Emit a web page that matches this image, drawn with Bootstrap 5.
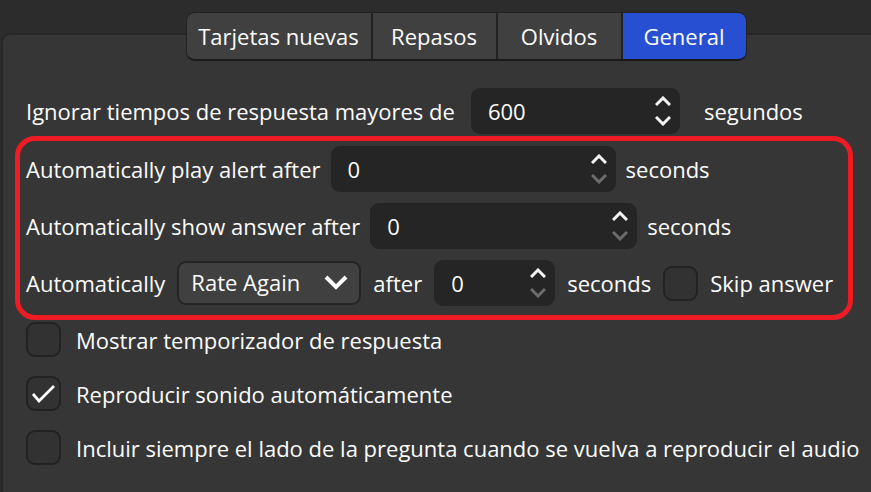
<!DOCTYPE html>
<html lang="es" data-bs-theme="dark">
<head>
<meta charset="utf-8">
<meta name="viewport" content="width=device-width, initial-scale=1">
<title>Opciones: General</title>
<link href="https://cdn.jsdelivr.net/npm/bootstrap@5.3.0/dist/css/bootstrap.min.css" rel="stylesheet">
<style>
  body {
    min-height: 100vh;
    background: #2c2c2c;
    color: #fcfcfc;
    font: 22px/30px "Open Sans", "Noto Sans", sans-serif;
    overflow-x: hidden;
    white-space: nowrap;
  }

  /* Tabs straddle the top edge of the panel */
  .tab-strip { padding: 12px 0 0 61px; margin-bottom: -28px; position: relative; z-index: 1; }
  .tab-group { background: #222; border: 1px solid #222; border-bottom: 2px solid #1a1a1a; border-radius: 9px; gap: 2px; overflow: hidden; }
  .tab-item { height: 46px; width: 123px; border: 0; padding: 0; background: #404040; color: inherit; }
  .tab-item.wide { width: 184px; }
  .tab-item.active { background: #2650d1; }

  .panel { flex-grow: 1; margin-left: 1px; padding: 53px 18px 24px 12px; background: #363636; border: 2px solid #272727; border-width: 2px 0 0 2px; border-top-left-radius: 9px; }
  .line { padding-left: 11px; }
  .highlight { margin-top: 2px; padding: 5px 0 9px 6px; gap: 11px; border: 5px solid #ed1c24; border-radius: 20px; }
  .highlight .line { padding-left: 0; gap: 10px; }
  .highlight .line.roomy { gap: 12px; }

  .spin { height: 46px; padding: 0 9px 0 17px; background: #252525; border-radius: 9px; }
  .spin input { width: 0; flex: 1 1 0; padding: 0; border: 0; background: none; color: inherit; outline: 0; appearance: textfield; -moz-appearance: textfield; }
  .spin input::-webkit-inner-spin-button { appearance: none; -webkit-appearance: none; margin: 0; }
  .spin button { display: flex; align-items: center; height: 20px; padding: 0; border: 0; background: none; color: #f2f2f2; }
  .spin button:disabled { color: #6b6b6b; }
  .w-sm { width: 121px; }
  .w-md { width: 209px; }
  .w-lg { width: 267px; }
  .w-xl { width: 285px; }

  .rate { width: 184px; height: 44px; padding: 0 40px 2px 12px; color: inherit; font-size: 22px; line-height: 30px; border: 2px solid #242424; border-radius: 9px;
    background: #404040 url("data:image/svg+xml,%3Csvg xmlns='http://www.w3.org/2000/svg' viewBox='0 0 24 16'%3E%3Cpath d='M2 2l10 10L22 2' fill='none' stroke='%23fcfcfc' stroke-width='4'/%3E%3C/svg%3E") no-repeat right 11px center / 24px 16px; }

  .line .tick { width: 35px; height: 35px; margin: 0; flex-shrink: 0; background-color: #323232; border: 2px solid #222; border-radius: 9px; }
  .line .tick:checked { background-color: #323232; border-color: #222; background-size: 23px 18px;
    background-image: url("data:image/svg+xml,%3Csvg xmlns='http://www.w3.org/2000/svg' viewBox='0 0 23 18'%3E%3Cpath d='M1 9l6 7L22 1' fill='none' stroke='%23fcfcfc' stroke-width='2.8'/%3E%3C/svg%3E"); }
  .checks { gap: 19px; padding-top: 2px; }
  .checks .line { gap: 15px; }
  .checks .line label { padding-top: 3px; height: 35px; }
</style>
<script src="https://cdn.jsdelivr.net/npm/bootstrap@5.3.0/dist/js/bootstrap.bundle.min.js"></script>
</head>
<body class="d-flex flex-column">
<svg class="d-none" aria-hidden="true">
  <symbol id="up" viewBox="0 0 16 10"><path d="M1 9l7-7 7 7" fill="none" stroke="currentColor" stroke-width="3"/></symbol>
  <symbol id="down" viewBox="0 0 16 10"><path d="M1 1l7 7 7-7" fill="none" stroke="currentColor" stroke-width="3"/></symbol>
</svg>

<nav class="tab-strip d-flex justify-content-center" aria-label="Secciones">
  <div class="tab-group d-flex" role="tablist">
    <button type="button" class="tab-item wide" role="tab">Tarjetas nuevas</button>
    <button type="button" class="tab-item" role="tab">Repasos</button>
    <button type="button" class="tab-item" role="tab">Olvidos</button>
    <button type="button" class="tab-item active" role="tab" aria-selected="true">General</button>
  </div>
</nav>

<main class="panel">
  <div class="line d-flex align-items-center gap-3">
    <label for="maxTime">Ignorar tiempos de respuesta mayores de</label>
    <div class="spin w-md d-flex align-items-center">
      <input type="number" id="maxTime" value="600">
      <div class="d-flex flex-column">
        <button type="button" aria-label="Aumentar"><svg width="16" height="10"><use href="#up"/></svg></button>
        <button type="button" aria-label="Disminuir"><svg width="16" height="10"><use href="#down"/></svg></button>
      </div>
    </div>
    <span class="ps-2">segundos</span>
  </div>

  <section class="highlight d-flex flex-column">
    <div class="line d-flex align-items-center">
      <label for="alertAfter">Automatically play alert after</label>
      <div class="spin w-xl d-flex align-items-center">
        <input type="number" id="alertAfter" value="0" min="0">
        <div class="d-flex flex-column">
          <button type="button" aria-label="Aumentar"><svg width="16" height="10"><use href="#up"/></svg></button>
          <button type="button" aria-label="Disminuir" disabled><svg width="16" height="10"><use href="#down"/></svg></button>
        </div>
      </div>
      <span>seconds</span>
    </div>
    <div class="line d-flex align-items-center">
      <label for="answerAfter">Automatically show answer after</label>
      <div class="spin w-lg d-flex align-items-center">
        <input type="number" id="answerAfter" value="0" min="0">
        <div class="d-flex flex-column">
          <button type="button" aria-label="Aumentar"><svg width="16" height="10"><use href="#up"/></svg></button>
          <button type="button" aria-label="Disminuir" disabled><svg width="16" height="10"><use href="#down"/></svg></button>
        </div>
      </div>
      <span>seconds</span>
    </div>
    <div class="line roomy d-flex align-items-center">
      <label for="rate">Automatically</label>
      <select id="rate" class="form-select rate"><option>Rate Again</option></select>
      <label for="rateAfter">after</label>
      <div class="spin w-sm d-flex align-items-center">
        <input type="number" id="rateAfter" value="0" min="0">
        <div class="d-flex flex-column">
          <button type="button" aria-label="Aumentar"><svg width="16" height="10"><use href="#up"/></svg></button>
          <button type="button" aria-label="Disminuir" disabled><svg width="16" height="10"><use href="#down"/></svg></button>
        </div>
      </div>
      <span>seconds</span>
      <input type="checkbox" class="form-check-input tick" id="skip">
      <label for="skip">Skip answer</label>
    </div>
  </section>

  <div class="checks d-flex flex-column">
    <div class="line d-flex">
      <input type="checkbox" class="form-check-input tick" id="timer">
      <label for="timer">Mostrar temporizador de respuesta</label>
    </div>
    <div class="line d-flex">
      <input type="checkbox" class="form-check-input tick" id="autoplay" checked>
      <label for="autoplay">Reproducir sonido automáticamente</label>
    </div>
    <div class="line d-flex">
      <input type="checkbox" class="form-check-input tick" id="include">
      <label for="include">Incluir siempre el lado de la pregunta cuando se vuelva a reproducir el audio</label>
    </div>
  </div>
</main>
</body>
</html>
